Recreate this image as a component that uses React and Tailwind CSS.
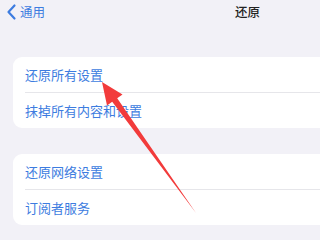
export default function App() {
  const font = { fontFamily: '"Noto Sans CJK SC", "Noto Sans", sans-serif' };
  return (
    <div className="relative w-[320px] h-[240px] overflow-hidden bg-[#f2f1f7]" style={font}>
      <div className="flex items-center h-[23px] pt-[1px]">
        <svg width="20" height="22" viewBox="0 0 20 22" className="shrink-0">
          <path d="M14.5 4.5 L8.5 11 L14.5 17.5" fill="none" stroke="#3d7ce0" strokeWidth="2.2" strokeLinecap="round" strokeLinejoin="round" />
        </svg>
        <span className="text-[12.5px] leading-none text-[#3d7ce0]">通用</span>
        <span className="ml-auto mr-[60px] text-[12.5px] leading-none font-medium text-[#222]">还原</span>
      </div>
      <div className="mt-[34px] ml-[13px] bg-white rounded-l-[9px]">
        <div className="h-[35px] flex items-center pl-[12px] text-[13px] text-[#3d7ce0]">还原所有设置</div>
        <div className="ml-[12px] h-px bg-[#e6e6ea]"></div>
        <div className="h-[35px] flex items-center pl-[12px] text-[13px] text-[#3d7ce0]">抹掉所有内容和设置</div>
      </div>
      <div className="mt-[26px] ml-[13px] bg-white rounded-l-[9px]">
        <div className="h-[35px] flex items-center pl-[12px] text-[13px] text-[#3d7ce0]">还原网络设置</div>
        <div className="ml-[12px] h-px bg-[#e6e6ea]"></div>
        <div className="h-[35px] flex items-center pl-[12px] text-[13px] text-[#3d7ce0]">订阅者服务</div>
      </div>
      <svg className="absolute left-0 top-0" width="320" height="240" viewBox="0 0 320 240">
        <polygon points="102,82 122.5,94.5 117.2,98.2 196,213 112.2,101.8 107,105.5" fill="#f23b3b" />
      </svg>
    </div>
  );
}
